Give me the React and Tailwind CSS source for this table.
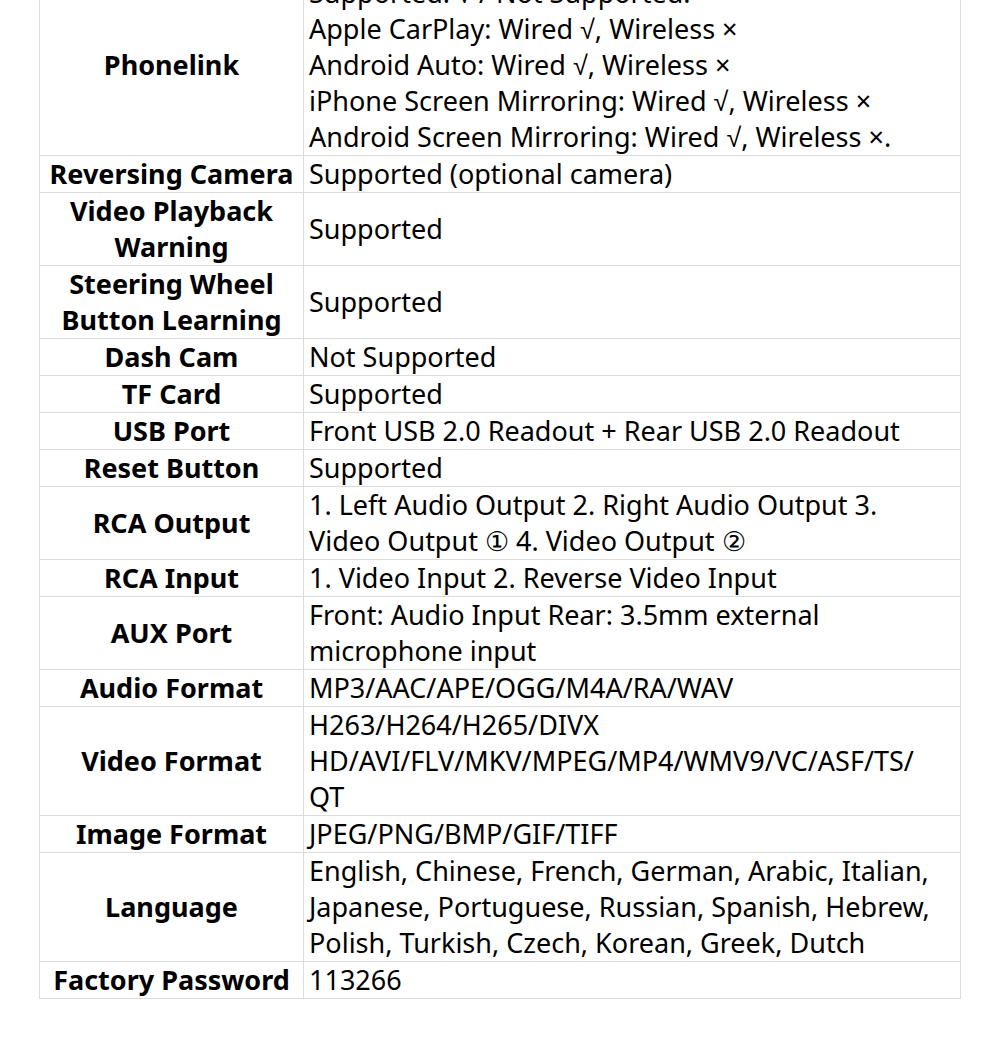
import React from 'react';

const rows = [
  {
    label: 'Phonelink',
    lines: [
      'Supported: √ / Not Supported: ×',
      'Apple CarPlay: Wired √, Wireless ×',
      'Android Auto: Wired √, Wireless ×',
      'iPhone Screen Mirroring: Wired √, Wireless ×',
      'Android Screen Mirroring: Wired √, Wireless ×.',
    ],
  },
  { label: 'Reversing Camera', lines: ['Supported (optional camera)'] },
  { label: ['Video Playback', 'Warning'], lines: ['Supported'] },
  { label: ['Steering Wheel', 'Button Learning'], lines: ['Supported'] },
  { label: 'Dash Cam', lines: ['Not Supported'] },
  { label: 'TF Card', lines: ['Supported'] },
  { label: 'USB Port', lines: ['Front USB 2.0 Readout + Rear USB 2.0 Readout'] },
  { label: 'Reset Button', lines: ['Supported'] },
  {
    label: 'RCA Output',
    lines: ['1. Left Audio Output 2. Right Audio Output 3.', 'Video Output ① 4. Video Output ②'],
  },
  { label: 'RCA Input', lines: ['1. Video Input 2. Reverse Video Input'] },
  {
    label: 'AUX Port',
    lines: ['Front: Audio Input Rear: 3.5mm external', 'microphone input'],
  },
  { label: 'Audio Format', lines: ['MP3/AAC/APE/OGG/M4A/RA/WAV'] },
  {
    label: 'Video Format',
    lines: ['H263/H264/H265/DIVX', 'HD/AVI/FLV/MKV/MPEG/MP4/WMV9/VC/ASF/TS/', 'QT'],
  },
  { label: 'Image Format', lines: ['JPEG/PNG/BMP/GIF/TIFF'] },
  {
    label: 'Language',
    lines: [
      'English, Chinese, French, German, Arabic, Italian,',
      'Japanese, Portuguese, Russian, Spanish, Hebrew,',
      'Polish, Turkish, Czech, Korean, Greek, Dutch',
    ],
  },
  { label: 'Factory Password', lines: ['113266'] },
];

export default function App() {
  return (
    <div className="w-[1000px] h-[1061px] overflow-hidden bg-white font-['Noto_Sans',sans-serif] text-black">
      <div className="mx-[39px] mt-[-26px] border border-[#dcdcdc]">
        {rows.map((row, i) => (
          <div
            key={i}
            className="grid grid-cols-[264px_1fr] border-b border-[#dcdcdc] last:border-b-0"
          >
            <div className="flex flex-col items-center justify-center border-r border-[#dcdcdc] text-center text-[27px] font-bold leading-[36px]">
              {Array.isArray(row.label)
                ? row.label.map((l) => <span key={l} className="whitespace-nowrap">{l}</span>)
                : <span className="whitespace-nowrap">{row.label}</span>}
            </div>
            <div className="flex flex-col justify-center px-[5px] text-[27px] leading-[36px]">
              {row.lines.map((l) => (
                <span key={l} className="whitespace-nowrap">{l}</span>
              ))}
            </div>
          </div>
        ))}
      </div>
    </div>
  );
}
